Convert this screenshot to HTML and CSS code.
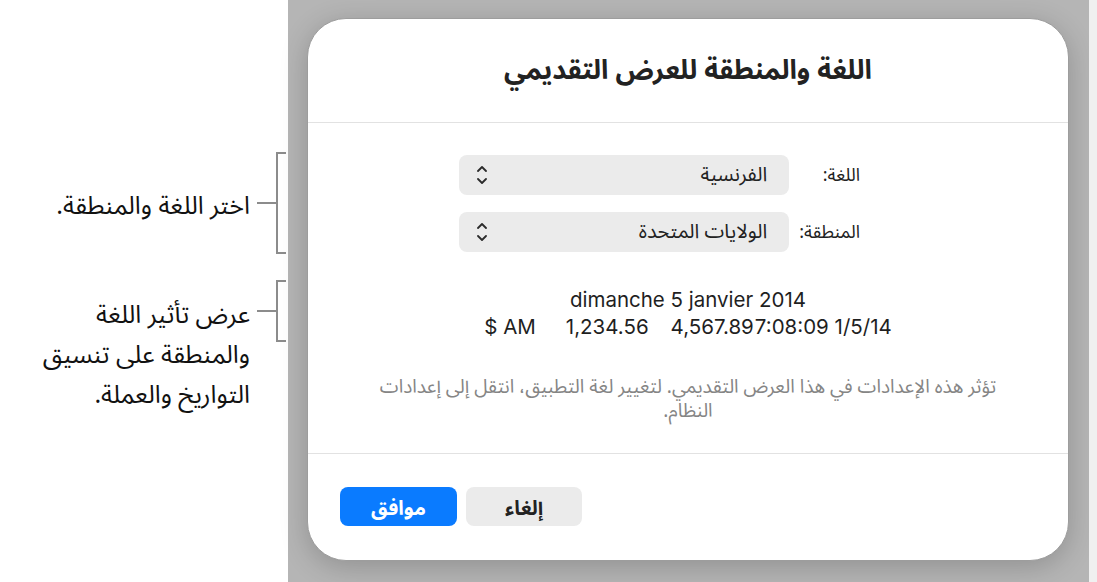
FILE: index.html
```html
<!DOCTYPE html>
<html lang="ar">
<head>
  <meta charset="UTF-8" />
  <meta name="viewport" content="width=device-width, initial-scale=1.0" />
  <title>اللغة والمنطقة للعرض التقديمي</title>
  <link rel="stylesheet" href="styles.css">
</head>
<body>
  <aside class="notes">
    <div class="note note-pick">
      <p class="note-text" dir="rtl">اختر اللغة والمنطقة.</p>
      <span class="lead"></span>
      <span class="bracket bracket-tall"></span>
    </div>
    <div class="note note-preview">
      <p class="note-text" dir="rtl">عرض تأثير اللغة<br>والمنطقة على تنسيق<br>التواريخ والعملة.</p>
      <span class="lead"></span>
      <span class="bracket bracket-short"></span>
    </div>
  </aside>

  <main class="stage">
    <div class="dialog" dir="rtl">
      <header class="dialog-head">
        <h1>اللغة والمنطقة للعرض التقديمي</h1>
      </header>

      <section class="dialog-body">
        <div class="form">
          <label class="form-label">اللغة:</label>
          <div class="popup">
            <span class="popup-value">الفرنسية</span>
            <svg class="popup-arrows" width="10" height="20" viewBox="0 0 10 20">
              <path d="M1 6 L5 2 L9 6 M1 14 L5 18 L9 14" fill="none" stroke="#2b2b2b" stroke-width="1.8" stroke-linecap="round" stroke-linejoin="round"/>
            </svg>
          </div>
          <label class="form-label">المنطقة:</label>
          <div class="popup">
            <span class="popup-value">الولايات المتحدة</span>
            <svg class="popup-arrows" width="10" height="20" viewBox="0 0 10 20">
              <path d="M1 6 L5 2 L9 6 M1 14 L5 18 L9 14" fill="none" stroke="#2b2b2b" stroke-width="1.8" stroke-linecap="round" stroke-linejoin="round"/>
            </svg>
          </div>
        </div>

        <div class="sample" dir="ltr">
          <div class="sample-date">dimanche 5 janvier 2014</div>
          <div class="sample-nums">
            <span>$ AM</span>
            <span class="num-a">1,234.56</span>
            <span class="num-b">4,567.89</span>
            <span class="num-c">7:08:09 1/5/14</span>
          </div>
        </div>

        <p class="hint">تؤثر هذه الإعدادات في هذا العرض التقديمي. لتغيير لغة التطبيق، انتقل إلى إعدادات<br>النظام.</p>
      </section>

      <footer class="dialog-foot" dir="ltr">
        <button class="btn btn-ok">موافق</button>
        <button class="btn btn-cancel">إلغاء</button>
      </footer>
    </div>
  </main>

  <div class="edge"></div>
</body>
</html>
```

FILE: styles.css
```css
body {
  margin: 0;
  width: 1097px;
  height: 582px;
  display: flex;
  overflow: hidden;
  background: #fff;
  font-family: 'Noto Sans Arabic', 'Noto Sans', 'DejaVu Sans', sans-serif;
  color: #1d1d1f;
}

/* callouts on the left */
.notes {
  width: 288px;
  flex-shrink: 0;
  box-sizing: border-box;
  padding-top: 152px;
  padding-left: 2px;
}
.note {
  display: flex;
  align-items: center;
}
.note-text {
  margin: 0;
  font-size: 25px;
  line-height: 40px;
  color: #111;
  text-align: right;
  width: 248px;
  flex-shrink: 0;
  white-space: nowrap;
}
.lead {
  width: 19px;
  height: 2px;
  background: #8c8c8c;
  margin-left: 7px;
}
.bracket {
  width: 10px;
  border: 2px solid #8c8c8c;
  border-right: none;
  box-sizing: border-box;
}
.bracket-tall { height: 102px; }
.bracket-short { height: 62px; }
.note-pick .note-text { margin-top: 6px; }
.note-preview {
  margin-top: 26px;
  align-items: flex-start;
}
.note-preview .note-text { margin-top: 15px; }
.note-preview .lead { margin-top: 30px; }

/* grey backdrop behind the sheet */
.stage {
  width: 801px;
  flex-shrink: 0;
  box-sizing: border-box;
  padding: 18px 20px 21px 19px;
  background: #b5b5b5;
  display: flex;
}
.edge {
  flex: 1;
  background: #f0f0f0;
}

.dialog {
  flex: 1;
  display: flex;
  flex-direction: column;
  background: #fff;
  border: 1px solid #9d9d9d;
  border-radius: 39px;
  box-shadow: 0 6px 28px rgba(0,0,0,0.2);
}
.dialog-head {
  height: 103px;
  display: flex;
  align-items: center;
  justify-content: center;
  border-bottom: 1px solid #e2e2e2;
}
.dialog-head h1 {
  margin: 0;
  font-size: 27px;
  font-weight: 700;
  color: #222;
}

.dialog-body {
  flex: 1;
  padding-top: 32px;
  border-bottom: 1px solid #e2e2e2;
}
.form {
  display: grid;
  grid-template-columns: auto 330px;
  justify-content: start;
  column-gap: 10px;
  row-gap: 17px;
  padding-right: 208px;
  align-items: center;
}
.form-label {
  font-size: 18px;
  line-height: 24px;
  color: #222;
  white-space: nowrap;
}
.popup {
  height: 40px;
  border-radius: 8px;
  background: #ebebeb;
  display: flex;
  align-items: center;
  justify-content: space-between;
  padding: 0 22px 0 18px;
}
.popup-value {
  font-size: 20px;
  line-height: 24px;
  color: #222;
}

.sample {
  margin-top: 34px;
  text-align: center;
  font-family: Inter, 'Liberation Sans', sans-serif;
  font-size: 20.5px;
  line-height: 27px;
  color: #1f1f1f;
}
.sample-nums {
  display: flex;
  justify-content: center;
}
.num-a { margin-left: 30px; }
.num-b { margin-left: 22px; }
.num-c { margin-left: 1px; }

.hint {
  margin: 35px 0 0;
  text-align: center;
  font-size: 19px;
  line-height: 24px;
  color: #858585;
  white-space: nowrap;
}

.dialog-foot {
  height: 106px;
  box-sizing: border-box;
  padding: 33px 0 0 32px;
  display: flex;
  gap: 9px;
  align-items: flex-start;
}
.btn {
  height: 39px;
  border: none;
  border-radius: 8px;
  font-family: inherit;
  font-size: 20px;
  font-weight: 700;
  cursor: pointer;
}
.btn-ok {
  width: 117px;
  background: #0a7bff;
  color: #fff;
}
.btn-cancel {
  width: 116px;
  background: #ebebeb;
  color: #222;
}
```
